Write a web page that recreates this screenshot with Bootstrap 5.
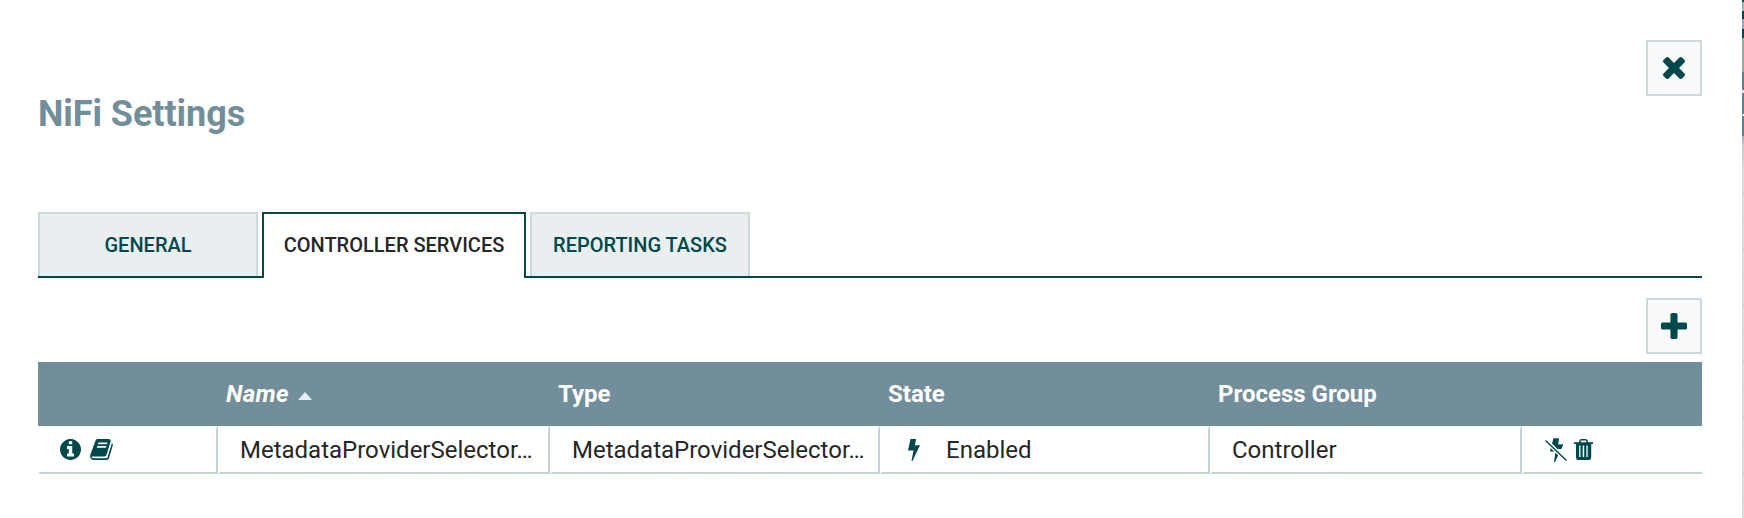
<!DOCTYPE html>
<html lang="en">
<head>
<meta charset="utf-8">
<title>NiFi Settings</title>
<link rel="stylesheet" href="https://cdn.jsdelivr.net/npm/bootstrap@5.3.0/dist/css/bootstrap.min.css">
<style>
body{font-family:Roboto,"Liberation Sans",sans-serif;background:#fff;color:#262626;height:518px;overflow:hidden}
.shell{width:1742px;padding:40px 40px 0 38px}
.canvas-edge{width:2px;background:
 linear-gradient(#004849 0 2px,#a0b5b5 2px 11px,#004849 11px 19px,#9aa9ab 19px 29px,#004849 29px 38px,#98a6a8 38px 72px,#607d88 72px 90px,#e4e6e6 90px 93px,#607d88 93px 114px,#e4e6e6 114px 116px,#607d88 116px 136px,#a9b0b0 136px 138px,#c4c8c7 144px,#d2d5d4 164px) 0 0/2px 164px no-repeat,
 repeating-linear-gradient(#cdd3d1 0 2px,#dadcdb 2px 28px) 0 164px/2px 560px no-repeat}
.title-text{font-size:36px;line-height:42px;font-weight:700;color:#728e9b;margin-top:53px;letter-spacing:-.06px}
.sq-btn{width:56px;height:56px;border:2px solid #ccdadb;border-radius:0;background:#f9fafb;color:#004849;padding:0 0 1px}
.sq-btn:hover{background:#f9fafb;border-color:#004849}
.head-row{height:172px}
.tabs-bar{height:66px;gap:4px;border-bottom:2px solid #004849}
.tabs-bar .nav-link{height:64px;width:220px;padding:0;border:2px solid #ccdadb;border-bottom:0;border-radius:0;margin:0;background:#e9eef0;color:#004849;font-size:20px;font-weight:500;line-height:62px;text-align:center}
.tabs-bar .nav-link.active{width:264px;height:66px;background:#fff;color:#262626;border-color:#004849;border-radius:0 0 2px 2px}
.add-row{padding:20px 0 8px}
.cols{display:grid;grid-template-columns:180px 332px 330px 330px 312px 180px}
.cols-head{height:64px;background:#728e9b;color:#fff;font-size:24px;font-weight:700;line-height:64px}
.cols-head>div{padding-left:8px}
.cols-head em{letter-spacing:.35px}
.cols-body{height:48px;font-size:24px;line-height:44px}
.cols-body>div{border:2px solid #c7d2d7;border-top-color:#fff;border-left-color:#fff;padding:0 16px 0 20px;white-space:nowrap;overflow:hidden}
.cols-body>.state-cell{padding-left:26px}
.state-cell span{margin-left:26px}
.cols-body>div:last-child{border-right:0;padding-left:21px}
.sort-up{width:0;height:0;border:7px solid transparent;border-top:0;border-bottom:8px solid #e3eefb;margin-left:9px;margin-top:4px}
.ico{fill:#004849;display:block;flex:none}
.ico-up{margin-top:-1px}
</style>
<script src="https://cdn.jsdelivr.net/npm/bootstrap@5.3.0/dist/js/bootstrap.bundle.min.js"></script>
</head>
<body class="d-flex">
<main class="shell flex-shrink-0">
 <header class="head-row d-flex justify-content-between align-items-start">
  <h1 class="title-text mb-0">NiFi Settings</h1>
  <button class="btn sq-btn d-flex align-items-center justify-content-center" aria-label="Close">
   <svg class="ico" width="22" height="22" viewBox="110 238 1188 1188"><path d="M1298 1258q0 40-28 68l-136 136q-28 28-68 28t-68-28l-294-294-294 294q-28 28-68 28t-68-28l-136-136q-28-28-28-68t28-68l294-294-294-294q-28-28-28-68t28-68l136-136q28-28 68-28t68 28l294 294 294-294q28-28 68-28t68 28l136 136q28 28 28 68t-28 68l-294 294 294 294q28 28 28 68z" transform="translate(0 -64)"/></svg>
  </button>
 </header>
 <ul class="nav nav-tabs tabs-bar flex-nowrap">
  <li class="nav-item"><a class="nav-link" href="#">GENERAL</a></li>
  <li class="nav-item"><a class="nav-link active" href="#">CONTROLLER SERVICES</a></li>
  <li class="nav-item"><a class="nav-link" href="#">REPORTING TASKS</a></li>
 </ul>
 <div class="add-row d-flex justify-content-end">
  <button class="btn sq-btn d-flex align-items-center justify-content-center" aria-label="Add">
   <svg class="ico" width="26" height="26" viewBox="0 0 1408 1408"><path d="M1408 608v192q0 40-28 68t-68 28H896v416q0 40-28 68t-68 28H608q-40 0-68-28t-28-68V896H96q-40 0-68-28T0 800V608q0-40 28-68t68-28h416V96q0-40 28-68t68-28h192q40 0 68 28t28 68v416h416q40 0 68 28t28 68z"/></svg>
  </button>
 </div>
 <section>
  <div class="cols cols-head">
   <div></div>
   <div class="d-flex align-items-center"><em>Name</em><span class="sort-up"></span></div>
   <div>Type</div><div>State</div><div>Process Group</div><div></div>
  </div>
  <div class="cols cols-body">
   <div class="d-flex align-items-center">
    <svg class="ico ico-up" width="21" height="21" viewBox="0 0 1536 1536"><path d="M1024 1248v-160q0-14-9-23t-23-9h-96V544q0-14-9-23t-23-9H544q-14 0-23 9t-9 23v160q0 14 9 23t23 9h96v320h-96q-14 0-23 9t-9 23v160q0 14 9 23t23 9h448q14 0 23-9t9-23zM896 352V192q0-14-9-23t-23-9H672q-14 0-23 9t-9 23v160q0 14 9 23t23 9h192q14 0 23-9t9-23zM1536 768q0 209-103 385.500T1153.500 1433 768 1536t-385.500-103T103 1153.500 0 768t103-385.500T382.500 103 768 0t385.500 103T1433 382.500 1536 768z"/></svg>
    <svg class="ico ico-up" style="margin-left:9px" width="23" height="21" viewBox="0 128 1664 1536"><path d="M1639 478q40 57 18 129l-275 906q-19 64-76.500 107.500T1183 1664H260q-77 0-148.500-53.500T12 1479q-24-67-2-127 0-4 3-27t4-37q1-8-3-21.500t-3-19.500q2-11 8-21t16.500-23.500T52 1179q23-38 45-91.500t30-91.500q3-10 .5-30t-.5-28q3-11 17-28t17-23q21-36 42-92t25-90q1-9-2.500-32t.5-28q4-13 22-30.500t22-22.500q19-26 42.500-84.500T340 411q1-8-3-25.500t-2-26.500q2-8 9-18t18-23 17-21q8-12 16.500-30.500t15-35 16-36 19.500-32T469.500 140t36-11.500T553 134l-1 3q38-9 51-9h761q74 0 114 56t18 130l-274 906q-36 119-71.500 153.500T1022 1408H153q-27 0-38 15-11 16-1 43 24 70 144 70h923q29 0 56-15.500t35-41.500l300-987q7-22 5-57 38 15 59 43zM575 480q-4 13 2 22.500t20 9.500h608q13 0 25.500-9.500T1247 480l21-64q4-13-2-22.500t-20-9.500H638q-13 0-25.500 9.500T596 416zM492 736q-4 13 2 22.500t20 9.500h608q13 0 25.500-9.500T1164 736l21-64q4-13-2-22.500t-20-9.500H555q-13 0-25.500 9.500T513 672z"/></svg>
   </div>
   <div>MetadataProviderSelector…</div>
   <div>MetadataProviderSelector…</div>
   <div class="state-cell d-flex align-items-center">
    <svg class="ico" width="12" height="22" viewBox="0 0 12 22"><path d="M2.500 0H8L7 6.500 12 6 4.500 22H3.500L5.500 11.500H0z"/></svg>
    <span>Enabled</span>
   </div>
   <div>Controller</div>
   <div class="d-flex align-items-center">
    <svg class="ico" width="22" height="24" viewBox="0 0 22 24"><path d="M8.500.3H14L13.200 6.500 18.300 6.300 16.500 11 12.500 11.200 7 5.800zM6 8.500 14 15.500 10 24H9L10.600 13.500H5z"/><path d="M.5 2.500 21.500 22.500" stroke="#fff" stroke-width="3.800"/><path d="M.5 2.500 21.500 22.500" stroke="#004849" stroke-width="1.500"/></svg>
    <svg class="ico ico-up" style="margin-left:7px" width="19" height="21" viewBox="0 0 19 21"><path fill-rule="evenodd" d="M0 3.300H5L5.300 1.700Q5.700 0 7.300 0H11.600Q13.300 0 13.700 1.700L14 3.300H19V5H17.200V18.500Q17.200 21 14.900 21H4.200Q2 21 2 18.500V5H0zM6.600 3.300H12.400L12 1.500H7zM5.200 6.500V18H6.500V6.500zM8.700 6.500V18H10.200V6.500zM12.400 6.500V18H13.700V6.500z"/></svg>
   </div>
  </div>
 </section>
</main>
<aside class="canvas-edge flex-shrink-0"></aside>
</body>
</html>
